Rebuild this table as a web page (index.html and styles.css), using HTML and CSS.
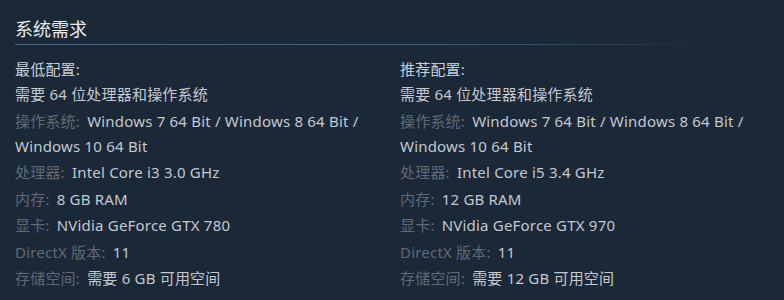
FILE: index.html
```html
<!DOCTYPE html>
<html lang="zh-CN">
<head>
<meta charset="utf-8">
<link rel="stylesheet" href="styles.css">
</head>
<body>
<div class="sysreq">
  <h2 class="title">系统需求</h2>
  <div class="cols">
    <div class="col">
      <div class="head">最低配置:</div>
      <ul class="list">
        <li>需要 64 位处理器和操作系统</li>
        <li><span class="lbl">操作系统:</span> Windows 7 64 Bit / Windows 8 64 Bit / Windows 10 64 Bit</li>
        <li><span class="lbl">处理器:</span> Intel Core i3 3.0 GHz</li>
        <li><span class="lbl">内存:</span> 8 GB RAM</li>
        <li><span class="lbl">显卡:</span> NVidia GeForce GTX 780</li>
        <li><span class="lbl">DirectX 版本:</span> 11</li>
        <li><span class="lbl">存储空间:</span> 需要 6 GB 可用空间</li>
      </ul>
    </div>
    <div class="col">
      <div class="head">推荐配置:</div>
      <ul class="list">
        <li>需要 64 位处理器和操作系统</li>
        <li><span class="lbl">操作系统:</span> Windows 7 64 Bit / Windows 8 64 Bit / Windows 10 64 Bit</li>
        <li><span class="lbl">处理器:</span> Intel Core i5 3.4 GHz</li>
        <li><span class="lbl">内存:</span> 12 GB RAM</li>
        <li><span class="lbl">显卡:</span> NVidia GeForce GTX 970</li>
        <li><span class="lbl">DirectX 版本:</span> 11</li>
        <li><span class="lbl">存储空间:</span> 需要 12 GB 可用空间</li>
      </ul>
    </div>
  </div>
</div>
</body>
</html>
```
FILE: styles.css
```css
html, body {
  margin: 0;
  padding: 0;
  background: #1b2838;
  width: 784px;
  height: 300px;
  overflow: hidden;
}
.sysreq {
  padding: 17px 15px 0 15px;
  font-family: "Noto Sans", "Noto Sans CJK SC", sans-serif;
  color: #c6d4df;
}
.title {
  margin: 0;
  font-size: 18px;
  font-weight: normal;
  line-height: 24px;
  color: #e8ecef;
  padding-bottom: 3px;
  border-bottom: 1px solid transparent;
  border-image: linear-gradient(to right, #4a6b83 0%, #3d566b 65%, rgba(27,40,56,0) 92%) 1;
}
.cols {
  display: flex;
  padding-top: 12px;
}
.col {
  width: 385px;
  flex: none;
}
.head {
  font-size: 15px;
  line-height: 25px;
  letter-spacing: 0.2px;
  color: #c6d0d8;
}
.list {
  list-style: none;
  margin: 0;
  padding: 0;
  font-size: 15px;
  line-height: 25px;
  letter-spacing: 0.2px;
  color: #c3c9cf;
}
.list li {
  margin-bottom: 1.5px;
  padding-right: 10px;
}
.lbl {
  color: #5f6a75;
  margin-right: 3px;
}
```
